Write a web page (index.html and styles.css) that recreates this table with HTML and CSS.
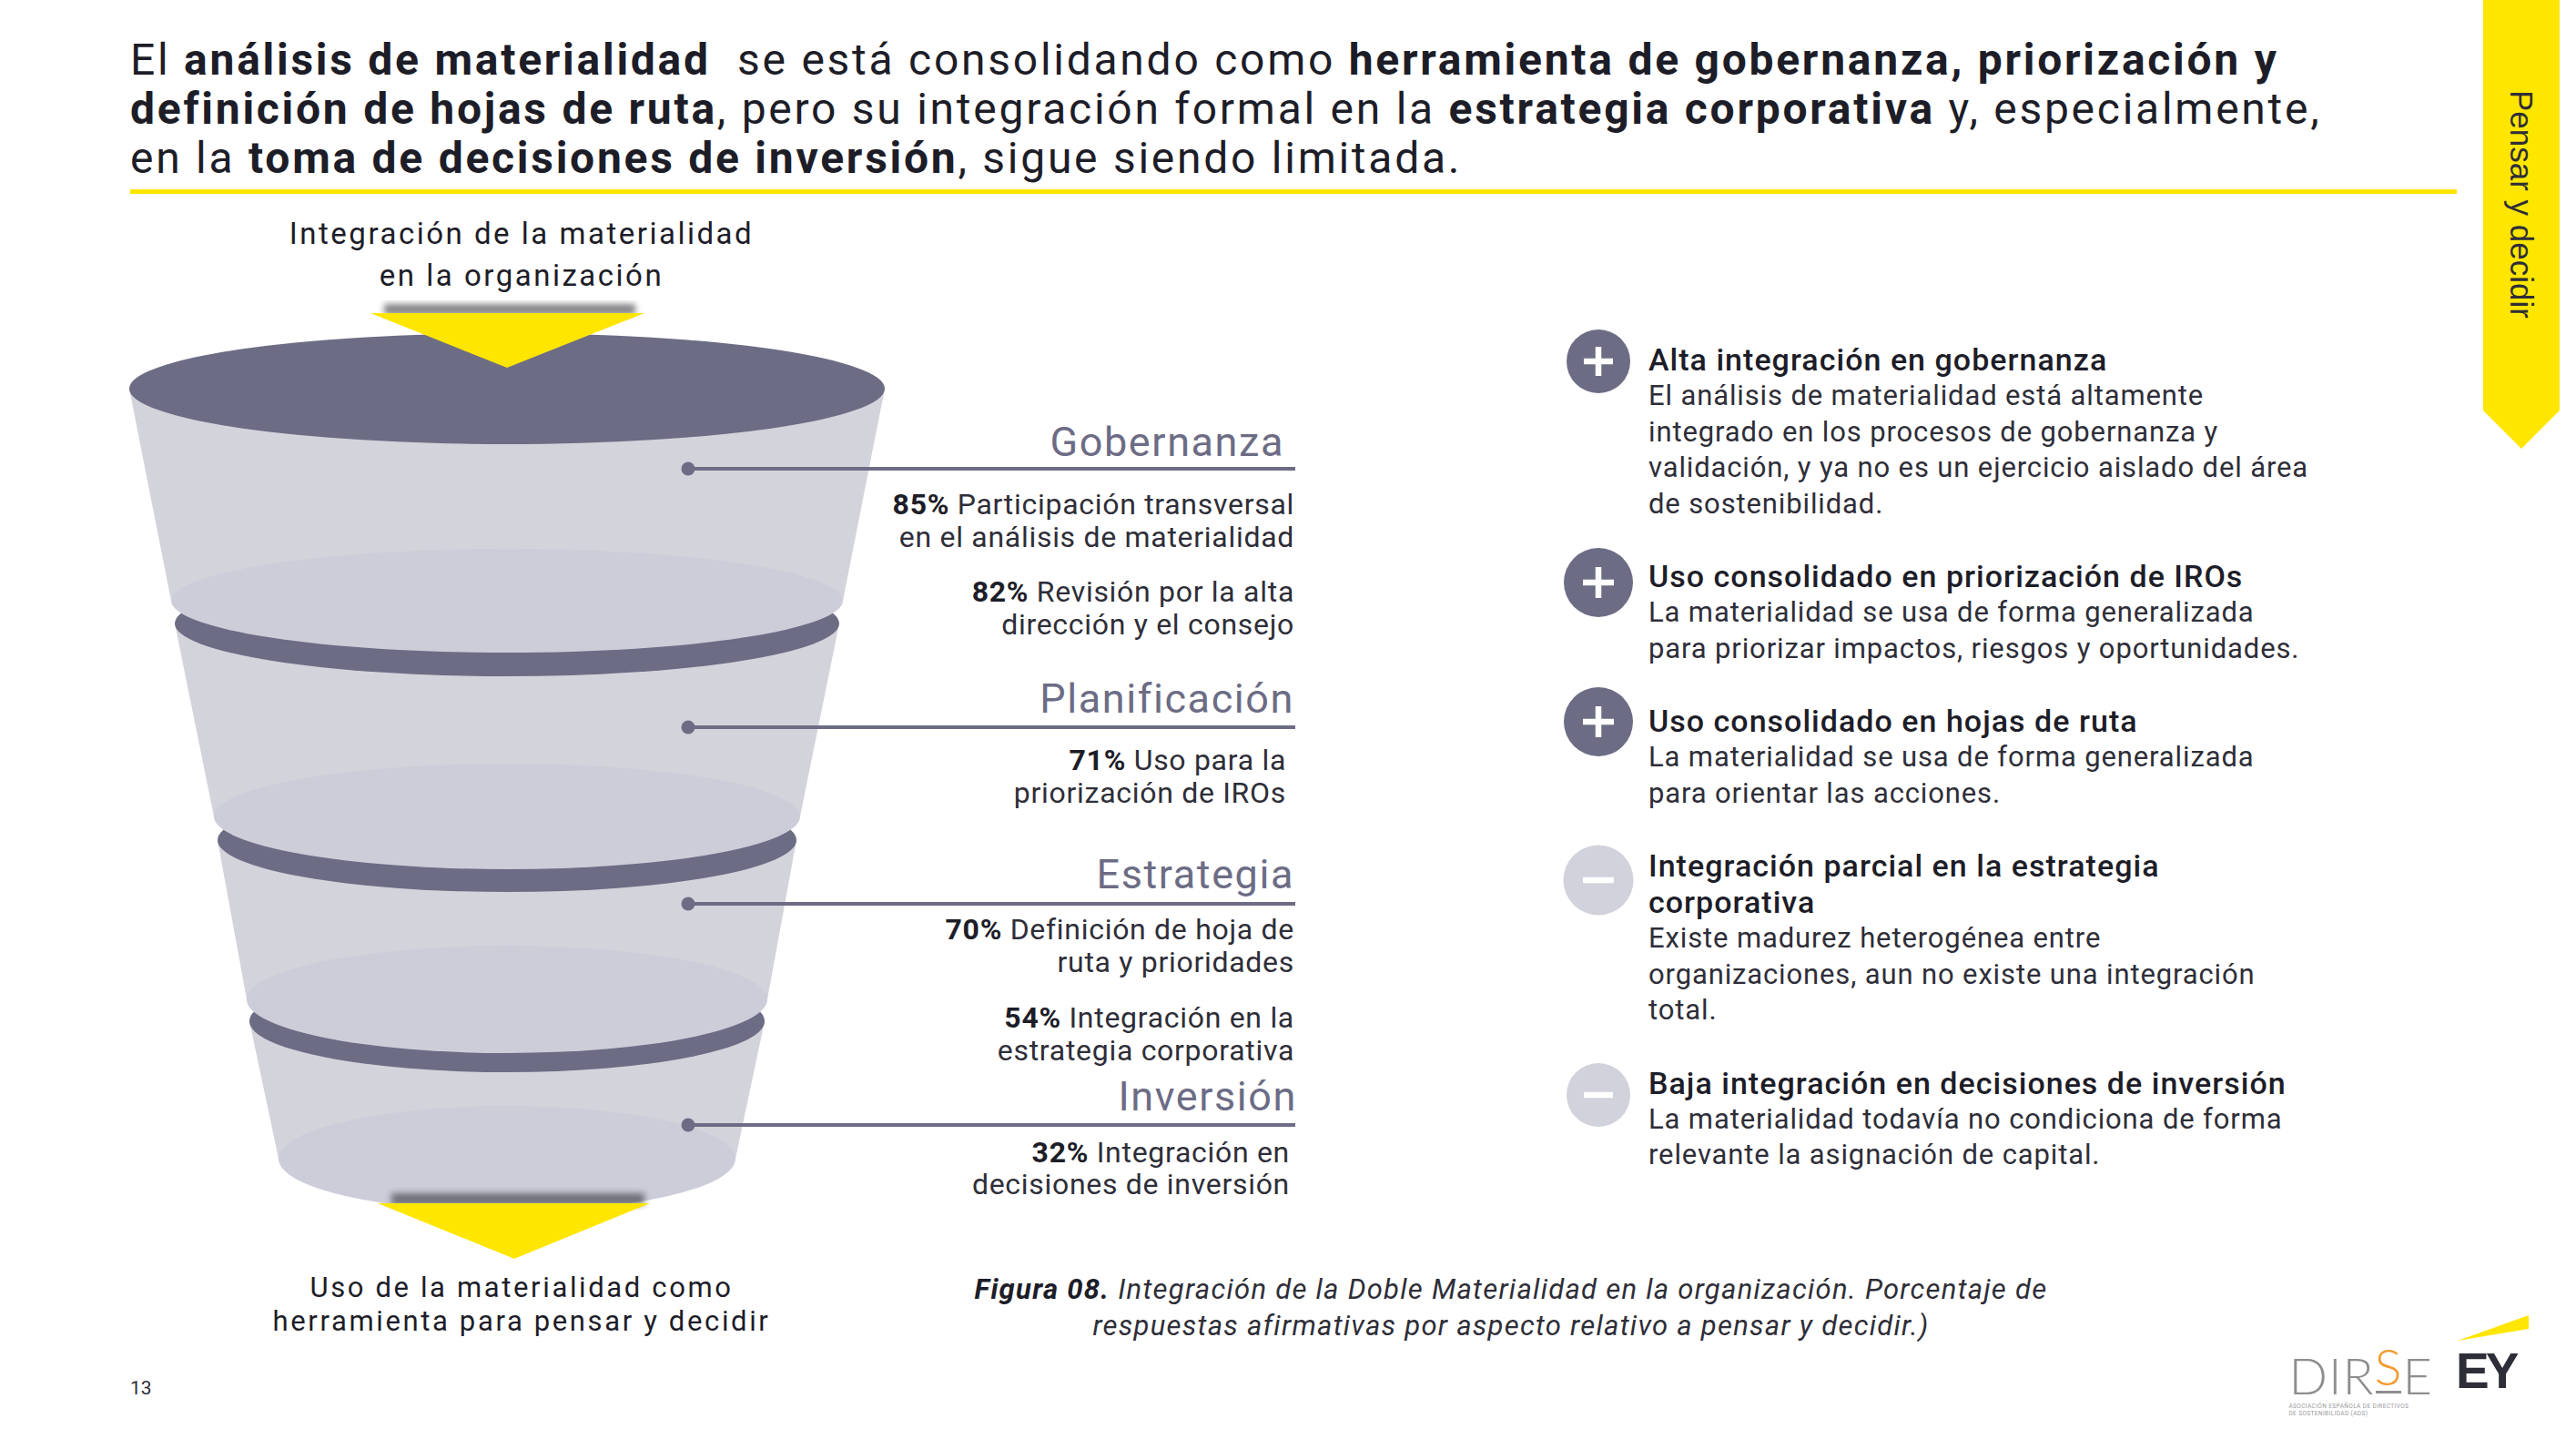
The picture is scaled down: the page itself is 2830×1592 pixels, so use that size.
FILE: index.html
```html
<!DOCTYPE html>
<html lang="es">
<head>
<meta charset="utf-8">
<title>Pensar y decidir</title>
<link rel="stylesheet" href="styles.css">
</head>
<body>
<div class="page">
  <div class="main">
    <h1 class="headline">El <b>análisis de materialidad</b>&nbsp; se está consolidando como <b>herramienta de gobernanza, priorización y</b><br><b>definición de hojas de ruta</b>, pero su integración formal en la <b>estrategia corporativa</b> y, especialmente,<br>en la <b>toma de decisiones de inversión</b>, sigue siendo limitada.</h1>
    <div class="rule"></div>
    <div class="content">
      <div class="funnel-col">
        <div class="fc-top">Integración de la materialidad<br>en la organización</div>
        <svg class="funnel-svg" viewBox="135 330 1295 1060" xmlns="http://www.w3.org/2000/svg">
          <defs>
            <filter id="blur" x="-20%" y="-200%" width="140%" height="500%"><feGaussianBlur stdDeviation="3.5"/></filter>
          </defs>
          <!-- section 4 -->
          <path class="f-body" d="M274 1122 L840 1122 L808 1273 L306 1273 Z"/>
          <ellipse class="f-base" cx="557" cy="1273" rx="251" ry="58"/>
          <ellipse class="f-top" cx="557" cy="1122" rx="283" ry="56"/>
          <!-- section 3 -->
          <path class="f-body" d="M239 923 L875 923 L843 1098 L271 1098 Z"/>
          <ellipse class="f-base" cx="557" cy="1098" rx="286" ry="59"/>
          <ellipse class="f-top" cx="557" cy="923" rx="318" ry="57"/>
          <!-- section 2 -->
          <path class="f-body" d="M192 685 L922 685 L879 897 L235 897 Z"/>
          <ellipse class="f-base" cx="557" cy="897" rx="322" ry="58"/>
          <ellipse class="f-top" cx="557" cy="685" rx="365" ry="58"/>
          <!-- section 1 -->
          <path class="f-body" d="M142 427 L972 427 L926 660 L188 660 Z"/>
          <ellipse class="f-base" cx="557" cy="660" rx="369" ry="57"/>
          <ellipse class="f-top" cx="557" cy="427" rx="415" ry="61"/>
          <!-- arrows -->
          <rect class="f-shadow" x="422" y="334" width="276" height="12"/>
          <polygon class="f-arrow" points="407,344 708,344 557,404"/>
          <rect class="f-shadow" x="430" y="1311" width="278" height="13"/>
          <polygon class="f-arrow" points="415,1322 714,1322 565,1383"/>
          <!-- leader lines -->
          <path class="f-line" d="M756 515 H1423 M756 799 H1423 M756 993 H1423 M756 1236 H1423"/>
          <circle class="f-dot" cx="756" cy="515" r="7.5"/>
          <circle class="f-dot" cx="756" cy="799" r="7.5"/>
          <circle class="f-dot" cx="756" cy="993" r="7.5"/>
          <circle class="f-dot" cx="756" cy="1236" r="7.5"/>
          <!-- labels -->
          <text class="f-title" x="1411" y="501">Gobernanza</text>
          <text class="f-stat" x="1422" y="565"><tspan class="f-pct">85%</tspan> Participación transversal</text>
          <text class="f-stat" x="1422" y="601">en el análisis de materialidad</text>
          <text class="f-stat" x="1422" y="661"><tspan class="f-pct">82%</tspan> Revisión por la alta</text>
          <text class="f-stat" x="1422" y="697">dirección y el consejo</text>
          <text class="f-title" x="1422" y="783">Planificación</text>
          <text class="f-stat" x="1413" y="846"><tspan class="f-pct">71%</tspan> Uso para la</text>
          <text class="f-stat" x="1413" y="882">priorización de IROs</text>
          <text class="f-title" x="1422" y="976">Estrategia</text>
          <text class="f-stat" x="1422" y="1032"><tspan class="f-pct">70%</tspan> Definición de hoja de</text>
          <text class="f-stat" x="1422" y="1068">ruta y prioridades</text>
          <text class="f-stat" x="1422" y="1129"><tspan class="f-pct">54%</tspan> Integración en la</text>
          <text class="f-stat" x="1422" y="1165">estrategia corporativa</text>
          <text class="f-title" x="1425" y="1220">Inversión</text>
          <text class="f-stat" x="1417" y="1277"><tspan class="f-pct">32%</tspan> Integración en</text>
          <text class="f-stat" x="1417" y="1312">decisiones de inversión</text>
        </svg>
      </div>
      <div class="points">
        <div class="point">
          <svg class="pt-icon ic-1" viewBox="0 0 76 76"><circle class="ic-plus" cx="38" cy="38" r="35"/><path class="ic-glyph" d="M38 22 V54 M22 38 H54"/></svg>
          <div class="pt-text">
            <div class="pt-title">Alta integración en gobernanza</div>
            <div class="pt-body">El análisis de materialidad está altamente<br>integrado en los procesos de gobernanza y<br>validación, y ya no es un ejercicio aislado del área<br>de sostenibilidad.</div>
          </div>
        </div>
        <div class="point">
          <svg class="pt-icon ic-2" viewBox="0 0 76 76"><circle class="ic-plus" cx="38" cy="38" r="38"/><path class="ic-glyph" d="M38 21 V55 M21 38 H55"/></svg>
          <div class="pt-text">
            <div class="pt-title">Uso consolidado en priorización de IROs</div>
            <div class="pt-body">La materialidad se usa de forma generalizada<br>para priorizar impactos, riesgos y oportunidades.</div>
          </div>
        </div>
        <div class="point">
          <svg class="pt-icon ic-3" viewBox="0 0 76 76"><circle class="ic-plus" cx="38" cy="38" r="38"/><path class="ic-glyph" d="M38 21 V55 M21 38 H55"/></svg>
          <div class="pt-text">
            <div class="pt-title">Uso consolidado en hojas de ruta</div>
            <div class="pt-body">La materialidad se usa de forma generalizada<br>para orientar las acciones.</div>
          </div>
        </div>
        <div class="point">
          <svg class="pt-icon ic-4" viewBox="0 0 76 76"><circle class="ic-minus" cx="38" cy="38" r="38.5"/><path class="ic-glyph" d="M21 38 H55"/></svg>
          <div class="pt-text">
            <div class="pt-title">Integración parcial en la estrategia<br>corporativa</div>
            <div class="pt-body">Existe madurez heterogénea entre<br>organizaciones, aun no existe una integración<br>total.</div>
          </div>
        </div>
        <div class="point">
          <svg class="pt-icon ic-5" viewBox="0 0 76 76"><circle class="ic-minus" cx="38" cy="38" r="35"/><path class="ic-glyph" d="M22 38 H54"/></svg>
          <div class="pt-text">
            <div class="pt-title">Baja integración en decisiones de inversión</div>
            <div class="pt-body">La materialidad todavía no condiciona de forma<br>relevante la asignación de capital.</div>
          </div>
        </div>
      </div>
    </div>
  </div>
  <div class="tab"><span class="tab-text">Pensar y decidir</span></div>
  <div class="bottom">
    <div class="fc-bottom">Uso de la materialidad como<br>herramienta para pensar y decidir</div>
    <div class="fig-caption"><b>Figura 08.</b> Integración de la Doble Materialidad en la organización. Porcentaje de<br>respuestas afirmativas por aspecto relativo a pensar y decidir.)</div>
    <div class="page-num">13</div>
    <div class="logos">
      <div class="dirse">
        <div class="dirse-word">
          <span class="d-gray">DIR</span>
          <span class="d-s-group"><span class="d-orange">S</span><span class="d-bar"></span></span>
          <span class="d-gray">E</span>
        </div>
        <div class="dirse-sub">Asociación Española de Directivos<br>de Sostenibilidad (ADS)</div>
      </div>
      <div class="ey">
        <svg class="ey-beam" viewBox="0 0 80 39"><polygon points="2,28 80,0 80,15"/></svg>
        <div class="ey-text">EY</div>
      </div>
    </div>
  </div>
</div>
</body>
</html>
```
FILE: styles.css
```css
html, body {
  margin: 0;
  padding: 0;
  background: #ffffff;
}
body {
  font-family: Roboto, "Liberation Sans", Arial, sans-serif;
  color: #2e2e38;
}
.page {
  width: 2830px;
  height: 1592px;
  box-sizing: border-box;
  padding: 39px 0 0 143px;
  display: grid;
  grid-template-columns: 2569px 84px;
  grid-template-rows: auto 1fr;
  column-gap: 16px;
  overflow: hidden;
}
.main {
  grid-column: 1;
  grid-row: 1;
}
.headline {
  margin: 0;
  font-size: 48px;
  line-height: 54px;
  font-weight: 400;
  letter-spacing: 0.057em;
  color: #1d1d28;
  white-space: nowrap;
}
.headline b {
  font-weight: 700;
}
.rule {
  margin-top: 7px;
  width: 2556px;
  height: 5px;
  background: #ffe600;
}
.content {
  display: flex;
  align-items: flex-start;
}
.funnel-col {
  flex: none;
  width: 1295px;
  margin-left: -8px;
  padding-top: 21px;
}
.fc-top {
  width: 876px;
  text-align: center;
  font-size: 33px;
  line-height: 46px;
  letter-spacing: 0.076em;
  color: #1d1d28;
  white-space: nowrap;
}
.funnel-svg {
  display: block;
  width: 1295px;
  height: 1060px;
  margin-top: 4px;
}
.f-body { fill: #d3d3db; }
.f-base { fill: #cdcdda; }
.f-top { fill: #6c6c85; }
.f-arrow { fill: #ffe600; }
.f-shadow { fill: #333338; opacity: 0.6; filter: url(#blur); }
.f-line { stroke: #6c6c85; stroke-width: 4; fill: none; }
.f-dot { fill: #6c6c85; }
.f-title {
  font-family: Roboto, "Liberation Sans", sans-serif;
  font-size: 45px;
  font-weight: 400;
  letter-spacing: 0.035em;
  fill: #6c6c85;
  text-anchor: end;
}
.f-stat {
  font-family: Roboto, "Liberation Sans", sans-serif;
  font-size: 32px;
  letter-spacing: 0.022em;
  fill: #2e2e38;
  text-anchor: end;
}
.f-pct {
  font-weight: 700;
  fill: #1d1d28;
}
.points {
  margin-left: 288px;
  padding-top: 162px;
  display: flex;
  flex-direction: column;
  gap: 40px;
}
.point {
  display: flex;
  align-items: flex-start;
  gap: 17px;
}
.pt-icon {
  flex: none;
  width: 76px;
  height: 76px;
  overflow: visible;
}
.ic-1 { margin-top: -16px; }
.ic-2 { margin-top: -11px; }
.ic-3 { margin-top: -17px; }
.ic-4 { margin-top: -2px; }
.ic-5 { margin-top: -5px; }
.ic-plus { fill: #6c6c85; }
.ic-minus { fill: #d2d2dc; }
.ic-glyph { stroke: #ffffff; stroke-width: 6.5; fill: none; }
.pt-text {
  white-space: nowrap;
}
.pt-title {
  font-size: 34px;
  line-height: 40px;
  font-weight: 500;
  letter-spacing: 0.03em;
  color: #1d1d28;
}
.pt-body {
  font-size: 31px;
  line-height: 39.5px;
  letter-spacing: 0.028em;
  color: #2e2e38;
}
.tab {
  grid-column: 2;
  grid-row: 1;
  align-self: start;
  margin-top: -39px;
  height: 493px;
  box-sizing: border-box;
  padding-top: 99px;
  background: #ffe600;
  clip-path: polygon(0 0, 100% 0, 100% 451px, 50% 100%, 0 451px);
  display: flex;
  justify-content: center;
}
.tab-text {
  writing-mode: vertical-rl;
  font-family: "Liberation Sans", Arial, sans-serif;
  font-size: 35px;
  line-height: 40px;
  color: #2e2e38;
  white-space: nowrap;
}
.bottom {
  grid-column: 1 / -1;
  grid-row: 2;
  align-self: start;
  margin-top: 6px;
  display: grid;
  grid-template-columns: 860px 1314px 1fr;
  grid-template-rows: auto auto;
}
.fc-bottom {
  grid-column: 1;
  grid-row: 1;
  text-align: center;
  font-size: 31px;
  line-height: 37px;
  letter-spacing: 0.085em;
  color: #1d1d28;
  white-space: nowrap;
}
.fig-caption {
  grid-column: 2;
  grid-row: 1;
  margin-top: 1px;
  text-align: center;
  font-style: italic;
  font-size: 31px;
  line-height: 40px;
  letter-spacing: 0.041em;
  color: #2e2e38;
  white-space: nowrap;
}
.fig-caption b {
  font-weight: 700;
  color: #1d1d28;
}
.page-num {
  grid-column: 1;
  grid-row: 2;
  margin-top: 36px;
  padding-bottom: 19px;
  font-size: 21px;
  line-height: 25px;
  color: #2e2e38;
}
.logos {
  grid-column: 3;
  grid-row: 1 / 3;
  align-self: end;
  justify-self: end;
  margin-right: 34px;
  display: flex;
  align-items: flex-start;
  gap: 25px;
}
.dirse {
  margin-top: 36px;
}
.dirse-word {
  display: flex;
  align-items: flex-end;
  font-family: Lato, "Open Sans", sans-serif;
  font-weight: 300;
  font-size: 56px;
  line-height: 40px;
  letter-spacing: 1px;
}
.d-gray { color: #8e8e8e; }
.d-orange { color: #f29a2e; line-height: 40px; }
.d-s-group {
  display: flex;
  flex-direction: column;
  align-items: center;
}
.d-bar {
  width: 28px;
  height: 3px;
  margin-top: 7px;
  background: #8e8e8e;
}
.dirse-sub {
  margin-top: 10px;
  font-family: Roboto, sans-serif;
  font-size: 6.5px;
  line-height: 8px;
  letter-spacing: 0.06em;
  text-transform: uppercase;
  color: #9a9a9a;
  white-space: nowrap;
}
.ey {
  display: flex;
  flex-direction: column;
  width: 80px;
}
.ey-beam {
  display: block;
  width: 80px;
  height: 39px;
  fill: #ffe600;
}
.ey-text {
  font-family: "Liberation Sans", Arial, sans-serif;
  font-weight: 700;
  font-size: 55px;
  line-height: 44px;
  letter-spacing: -4px;
  color: #2e2e38;
  white-space: nowrap;
}
```
